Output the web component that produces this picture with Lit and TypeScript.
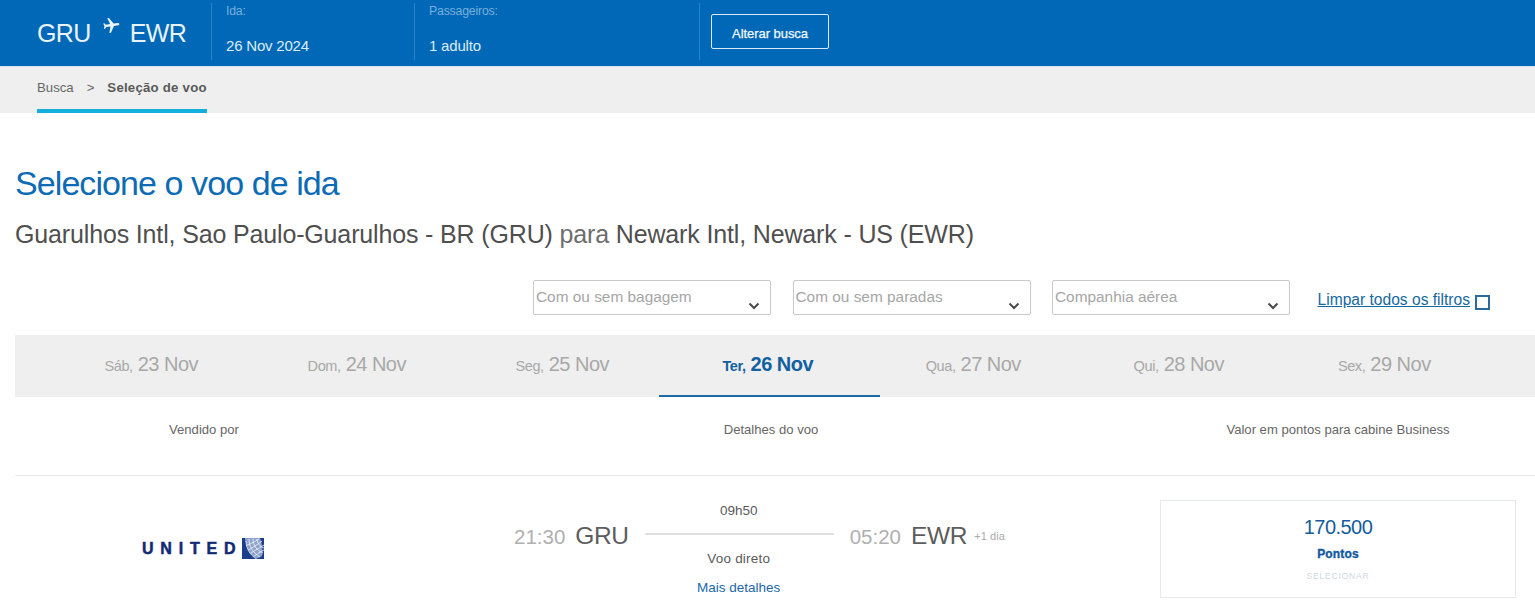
import { LitElement, html, css, svg } from "lit";
import { customElement } from "lit/decorators.js";

@customElement("app-root")
export class AppRoot extends LitElement {
  static styles = css`
    :host { display: block; width: 1535px; height: 606px; overflow: hidden; background: #fff; font-family: "Liberation Sans", Arial, sans-serif; color: #555; }
    * { box-sizing: border-box; }
    .top { height: 67px; background: #0068b7; border-bottom: 1px solid #cfe6f5; display: flex; padding-left: 37px; color: #e8f3fb; }
    .route { width: 174px; padding-top: 18px; font-size: 25px; line-height: 30px; letter-spacing: -0.6px; display: flex; align-items: flex-start; white-space: nowrap; }
    .route svg { width: 19px; height: 19px; margin: -2px 9px 0 11px; }
    .cell { margin-top: 3px; height: 57px; border-left: 1px solid #2b82c5; padding-left: 14px; display: flex; flex-direction: column; }
    .cell.ida { width: 203px; }
    .cell.pax { width: 285px; }
    .cell.act { padding-left: 11px; padding-top: 11px; }
    .lab { font-size: 12.3px; line-height: 14px; margin-top: 1px; color: #76afdc; letter-spacing: -0.2px; }
    .val { font-size: 15px; line-height: 18px; margin-top: 19px; letter-spacing: -0.2px; color: #dcecf8; }
    .btn { width: 118px; height: 35px; border: 1px solid #d8ecf8; border-radius: 2px; background: transparent; color: #f2f8fc; font: 400 13px/38px "Liberation Sans", Arial, sans-serif; letter-spacing: -0.05px; padding: 0; -webkit-text-stroke: 0.25px #f2f8fc; }
    .crumbs { height: 46px; background: #efefef; padding-left: 37px; }
    .crumbwrap { display: inline-flex; flex-direction: column; height: 46px; }
    .crumbline { flex: 1; font-size: 13.2px; line-height: 42px; color: #666; white-space: nowrap; }
    .crumbline i { font-style: normal; margin: 0 13px 0 13px; }
    .crumbline b { color: #5a5a5a; letter-spacing: 0.24px; }
    .bar { height: 6px; background: #14aedb; }
    main { padding: 48px 0 0 15px; }
    h1 { margin: 0; font-weight: 400; font-size: 34px; line-height: 44px; letter-spacing: -0.92px; color: #0d6bb5; }
    h2 { margin: 14px 0 0; font-weight: 400; font-size: 25px; line-height: 30px; letter-spacing: -0.15px; color: #4f4f4f; white-space: nowrap; }
    h2 span { color: #6e6e6e; }
    .filters { display: flex; margin-top: 31px; height: 36px; padding-left: 518px; }
    .sel { position: relative; width: 238px; height: 35px; border: 1px solid #c9c9c9; border-radius: 2px; margin-right: 21.5px; padding: 6px 0 0 2px; font-size: 15.4px; line-height: 19px; color: #a6a6a6; }
    .sel svg { position: absolute; right: 10px; bottom: 4px; width: 12px; height: 8px; }
    .clear { margin-left: 6px; padding-top: 11px; display: flex; white-space: nowrap; font-size: 15.6px; line-height: 18px; color: #15689f; }
    .clear span { text-decoration: underline; }
    .box { display: inline-block; width: 15px; height: 15px; border: 2px solid #2c6a9c; margin: 4px 0 0 5px; }
    .dates { margin-top: 19px; height: 62px; background: #efefef; display: grid; grid-template-columns: repeat(7, 205.5px); padding-left: 33.5px; }
    .d { position: relative; text-align: center; color: #a8a8a8; font-size: 20px; line-height: 58px; letter-spacing: -0.52px; white-space: nowrap; }
    .d small { font-size: 14.5px; letter-spacing: -0.4px; }
    .d.on { color: #11609f; font-weight: 700; }
    .d.on::after { content: ""; position: absolute; left: -6px; right: -9px; bottom: 0; height: 2px; background: #1d6aa7; }
    .heads { display: grid; grid-template-columns: 378px 756px 1fr; height: 79px; border-bottom: 1px solid #e6e6e6; text-align: center; font-size: 13.1px; line-height: 66px; color: #666; }
    .heads div:last-child { padding-right: 8px; }
    .row { display: grid; grid-template-columns: 378px 767px 356px; height: 131px; }
    .logo { display: flex; justify-content: flex-start; align-items: flex-start; padding: 62px 0 0 127px; }
    .logo span { font-weight: 700; font-size: 16px; line-height: 21px; letter-spacing: 6.8px; color: #122a74; -webkit-text-stroke: 0.5px #122a74; white-space: nowrap; }
    .logo svg { width: 22px; height: 21px; margin-left: 0; flex: none; }
    .flight { display: flex; padding-left: 121px; }
    .pt { padding-top: 45px; display: flex; align-items: baseline; height: 80px; white-space: nowrap; }
    .time { font-size: 20.5px; line-height: 30px; color: #b0b0b0; }
    .code { font-size: 24.5px; line-height: 30px; color: #5d5d5d; margin-left: 10px; letter-spacing: -0.35px; }
    .plus { font-size: 11px; color: #aaa; margin-left: 7px; position: relative; top: -4px; letter-spacing: 0.1px; }
    .mid { width: 189px; margin: 0 15.5px 0 16.5px; text-align: center; font-size: 13.5px; color: #5a5a5a; }
    .dur { margin: 27px 0 0 -2px; line-height: 16px; }
    .line { height: 2px; background: #dedede; margin-top: 14px; }
    .dir { margin-top: 16px; line-height: 16px; letter-spacing: 0.2px; margin-left: -2px; }
    .more { margin-top: 13px; line-height: 16px; color: #1a68a8; margin-left: -2px; }
    .card { margin-top: 24px; height: 98px; border: 1px solid #e4e9ed; text-align: center; }
    .pts { margin-top: 14px; font-size: 20px; line-height: 24px; color: #145c9c; letter-spacing: -0.55px; }
    .pl { margin-top: 8px; font-size: 12px; font-weight: 700; line-height: 14px; color: #12589e; letter-spacing: 0.15px; -webkit-text-stroke: 0.35px #12589e; }
    .go { margin-top: 9px; font-size: 8.5px; line-height: 12px; color: #cdd8e4; letter-spacing: 0.8px; }
  `;

  private chev() {
    return html`<svg viewBox="0 0 12 8"><path d="M1.5 1.5 6 6l4.5-4.5" fill="none" stroke="#4a4a4a" stroke-width="2"/></svg>`;
  }

  private globe() {
    const lines = [
      "M4 3C3.5 9 7 16 14 21",
      "M7 1C7 8 11 15 18 19",
      "M11 0.5C11 7 14 12 21 15",
      "M15 1C15.5 5 17 8 22 10",
      "M1.5 9C5 7 11 5 17 1",
      "M3 14C8 11 14 8 20 3",
      "M6 17C10 14 16 11 22 7",
      "M10 20C13 17 18 14 22 12",
    ];
    return html`<svg viewBox="0 0 22 21"><rect width="22" height="21" fill="#1b3d8c"/><path d="M3 0H18C20 5 21 12 20 18L14 21C7 17 3 9 3 0Z" fill="#8ea3cc"/>${lines.map((d) => svg`<path d=${d} fill="none" stroke="#e6ecf6" stroke-width="0.9"/>`)}<path d="M0 0H3C3 9 7 17 14 21H0Z" fill="#1b3d8c"/></svg>`;
  }

  render() {
    const days: [string, string][] = [["Sáb,", "23 Nov"], ["Dom,", "24 Nov"], ["Seg,", "25 Nov"], ["Ter,", "26 Nov"], ["Qua,", "27 Nov"], ["Qui,", "28 Nov"], ["Sex,", "29 Nov"]];
    return html`
      <div class="top">
        <div class="route">GRU<svg viewBox="0 0 24 24"><path fill="#eaf4fb" transform="rotate(82 12 12)" d="M21 16v-2l-8-5V3.5C13 2.67 12.33 2 11.5 2S10 2.67 10 3.5V9l-8 5v2l8-2.5V19l-2 1.5V22l3.5-1 3.5 1v-1.5L13 19v-5.5l8 2.5z"/></svg>EWR</div>
        <div class="cell ida"><div class="lab">Ida:</div><div class="val">26 Nov 2024</div></div>
        <div class="cell pax"><div class="lab">Passageiros:</div><div class="val">1 adulto</div></div>
        <div class="cell act"><button class="btn">Alterar busca</button></div>
      </div>
      <div class="crumbs"><div class="crumbwrap"><div class="crumbline">Busca<i>&gt;</i><b>Seleção de voo</b></div><div class="bar"></div></div></div>
      <main>
        <h1>Selecione o voo de ida</h1>
        <h2>Guarulhos Intl, Sao Paulo-Guarulhos - BR (GRU) <span>para</span> Newark Intl, Newark - US (EWR)</h2>
        <div class="filters">
          <div class="sel">Com ou sem bagagem${this.chev()}</div>
          <div class="sel">Com ou sem paradas${this.chev()}</div>
          <div class="sel">Companhia aérea${this.chev()}</div>
          <div class="clear"><span>Limpar todos os filtros</span><i class="box"></i></div>
        </div>
        <div class="dates">
          ${days.map(([a, b]) => html`<div class="d ${a === "Ter," ? "on" : ""}"><small>${a}</small> ${b}</div>`)}
        </div>
        <div class="heads"><div>Vendido por</div><div>Detalhes do voo</div><div>Valor em pontos para cabine Business</div></div>
        <div class="row">
          <div class="logo"><span>UNITED</span>${this.globe()}</div>
          <div class="flight">
            <div class="pt"><span class="time">21:30</span><span class="code">GRU</span></div>
            <div class="mid">
              <div class="dur">09h50</div><div class="line"></div><div class="dir">Voo direto</div><div class="more">Mais detalhes</div>
            </div>
            <div class="pt"><span class="time">05:20</span><span class="code">EWR</span><span class="plus">+1 dia</span></div>
          </div>
          <div class="card"><div class="pts">170.500</div><div class="pl">Pontos</div><div class="go">SELECIONAR</div></div>
        </div>
      </main>
    `;
  }
}
